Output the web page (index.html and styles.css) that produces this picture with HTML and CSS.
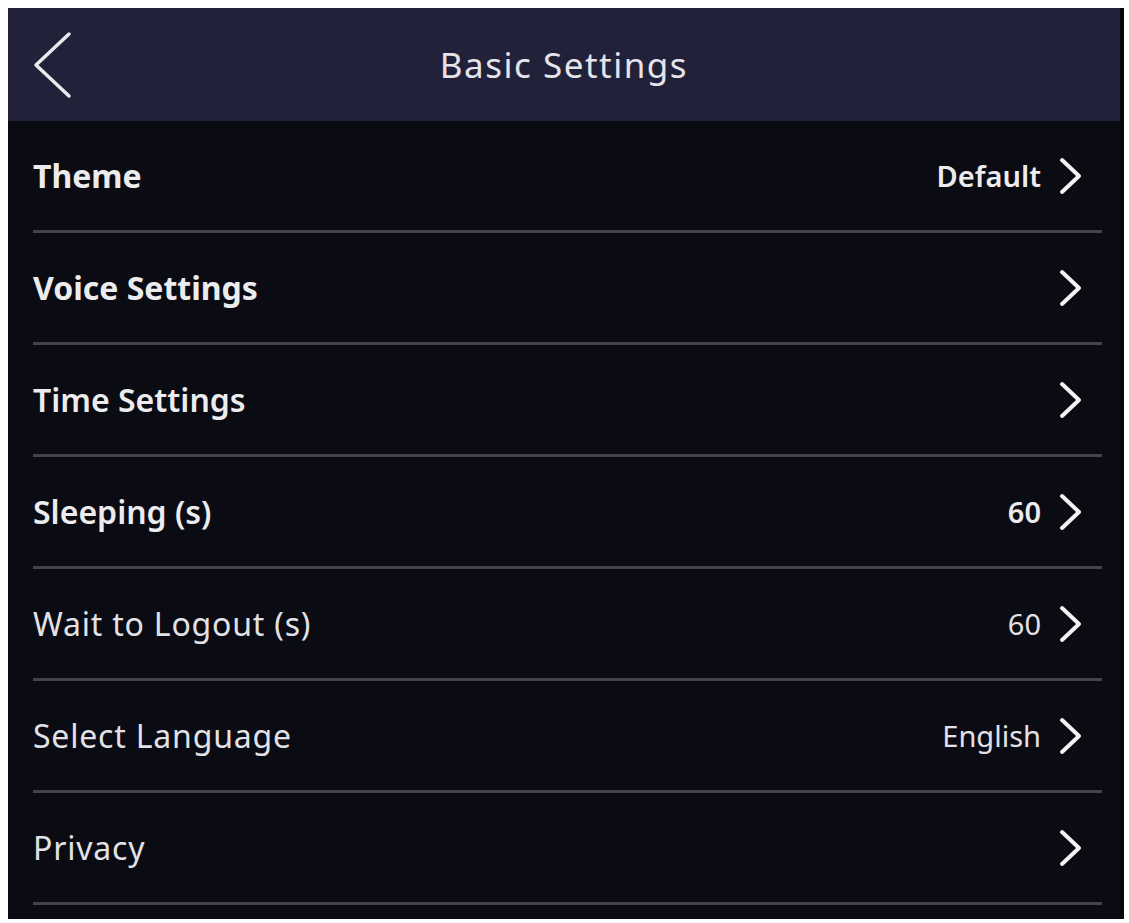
FILE: index.html
```html
<!DOCTYPE html>
<html lang="en">
<head>
    <meta charset="UTF-8">
    <meta name="viewport" content="width=device-width, initial-scale=1.0">
    <title>Basic Settings</title>
    <link rel="stylesheet" href="styles.css">
</head>
<body>
    <div class="screen">
        <!-- top bar -->
        <div class="top-bar">
            <svg class="back" width="40" height="68" viewBox="0 0 40 68">
                <polyline points="36,3 3,34 36,65" fill="none" stroke="#e9e9ee" stroke-width="3.5" stroke-linecap="round" stroke-linejoin="round"/>
            </svg>
            <h1 class="title">Basic Settings</h1>
        </div>
        <!-- settings list -->
        <ul class="list">
            <li class="item bold">
                <span class="label">Theme</span>
                <span class="value">Default</span>
                <svg class="arrow" width="26" height="38" viewBox="0 0 26 38"><polyline points="4,3 21,19 4,35" /></svg>
            </li>
            <li class="item bold">
                <span class="label">Voice Settings</span>
                <svg class="arrow" width="26" height="38" viewBox="0 0 26 38"><polyline points="4,3 21,19 4,35" /></svg>
            </li>
            <li class="item semi">
                <span class="label">Time Settings</span>
                <svg class="arrow" width="26" height="38" viewBox="0 0 26 38"><polyline points="4,3 21,19 4,35" /></svg>
            </li>
            <li class="item semi">
                <span class="label">Sleeping (s)</span>
                <span class="value">60</span>
                <svg class="arrow" width="26" height="38" viewBox="0 0 26 38"><polyline points="4,3 21,19 4,35" /></svg>
            </li>
            <li class="item light">
                <span class="label">Wait to Logout (s)</span>
                <span class="value">60</span>
                <svg class="arrow" width="26" height="38" viewBox="0 0 26 38"><polyline points="4,3 21,19 4,35" /></svg>
            </li>
            <li class="item light">
                <span class="label">Select Language</span>
                <span class="value">English</span>
                <svg class="arrow" width="26" height="38" viewBox="0 0 26 38"><polyline points="4,3 21,19 4,35" /></svg>
            </li>
            <li class="item light">
                <span class="label">Privacy</span>
                <svg class="arrow" width="26" height="38" viewBox="0 0 26 38"><polyline points="4,3 21,19 4,35" /></svg>
            </li>
        </ul>
    </div>
</body>
</html>
```

FILE: styles.css
```css
*{
    margin: 0;
    padding: 0;
    box-sizing: border-box;
}
html,body{
    height: 100%;
}
body{
    background-color: #fff;
    padding: 8px 5px 4px 8px;
    font-family: "Noto Sans", "DejaVu Sans", sans-serif;
    color: #ececef;
}
.screen{
    height: 911px;
    background-color: #0a0b13;
    border-right: 4px solid #05050a;
    padding-bottom: 11px;
}
.top-bar{
    height: 113px;
    background-color: #21213a;
    display: flex;
    align-items: center;
    position: relative;
    padding-left: 25px;
}
.back{
    display: block;
}
.title{
    position: absolute;
    left: 0;
    right: 0;
    text-align: center;
    font-size: 35px;
    font-weight: normal;
    letter-spacing: 1.5px;
    color: #e4e4ea;
    pointer-events: none;
}
.list{
    list-style: none;
    padding: 0 18px 0 25px;
}
.item{
    height: 112px;
    display: flex;
    align-items: center;
    border-bottom: 3px solid #42434b;
    font-size: 32px;
    padding-right: 18px;
}
.item .label{
    flex: 1;
}
.item .value{
    font-size: 29px;
    margin-right: 17px;
}
.bold{
    font-weight: 700;
}
.bold .value{
    font-weight: 600;
}
.semi{
    font-weight: 600;
}
.light{
    letter-spacing: 0.8px;
    color: #e2e2e6;
}
.light .value{
    letter-spacing: 0;
}
.arrow{
    display: block;
}
.arrow polyline{
    fill: none;
    stroke: #f2f2f5;
    stroke-width: 4;
    stroke-linecap: round;
    stroke-linejoin: round;
}
```
